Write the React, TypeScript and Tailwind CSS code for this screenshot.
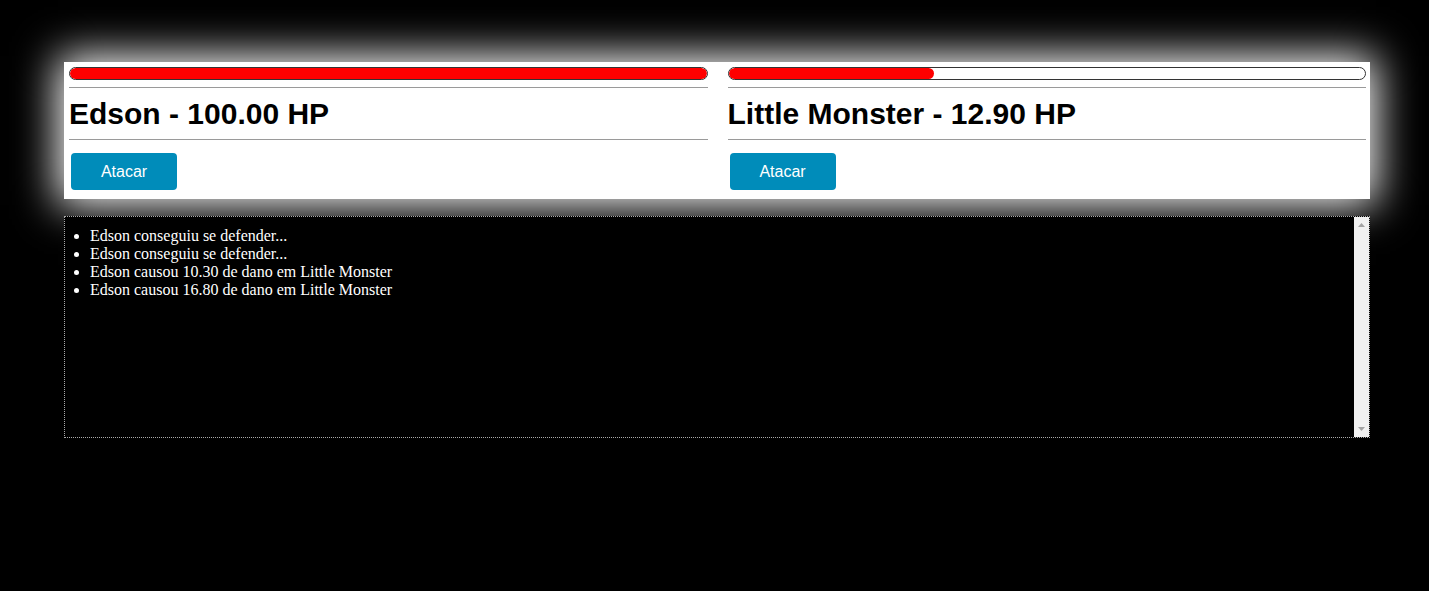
import React from "react";

type Fighter = { name: string; hp: string; pct: number };

const FIGHTERS: Fighter[] = [
  { name: "Edson", hp: "100.00", pct: 100 },
  { name: "Little Monster", hp: "12.90", pct: 32.3 },
];

const LOGS = [
  "Edson conseguiu se defender...",
  "Edson conseguiu se defender...",
  "Edson causou 10.30 de dano em Little Monster",
  "Edson causou 16.80 de dano em Little Monster",
];

function FighterCard({ fighter }: { fighter: Fighter }) {
  return (
    <div className="flex flex-col">
      <div className="h-[13px] rounded-full border border-[#333] bg-white overflow-hidden">
        <div
          className="h-full rounded-full bg-[#ff0000]"
          style={{ width: `${fighter.pct}%` }}
        />
      </div>
      <hr className="mt-[7px] border-t border-[#9a9a9a]" />
      <h2 className="h-[51px] flex items-center text-[30px] font-bold text-black leading-[34px]">
        {fighter.name} - {fighter.hp} HP
      </h2>
      <hr className="border-t border-[#9a9a9a]" />
      <div className="pt-[13px]">
        <button className="ml-[2px] h-[37px] w-[106px] rounded-[4px] bg-[#008cba] text-[16px] text-white">
          Atacar
        </button>
      </div>
    </div>
  );
}

// fake classic scrollbar, headless chrome hides the real one
function ScrollBar() {
  return (
    <div className="w-[15px] shrink-0 bg-[#f1f1f1] flex flex-col items-center justify-between py-[6px]">
      <svg width="7" height="4" viewBox="0 0 7 4">
        <path d="M3.5 0 L7 4 L0 4 Z" fill="#a3a3a3" />
      </svg>
      <svg width="7" height="4" viewBox="0 0 7 4">
        <path d="M0 0 L7 0 L3.5 4 Z" fill="#a3a3a3" />
      </svg>
    </div>
  );
}

export default function App() {
  return (
    <div
      className="min-h-[591px] bg-black pt-[62px] pl-[64px]"
      style={{ fontFamily: '"Liberation Sans", Arial, sans-serif' }}
    >
      <div className="w-[1306px] bg-white shadow-[0_0_40px_6px_#ffffff] grid grid-cols-2 gap-x-[20px] pl-[5px] pr-[4px] pt-[5px] pb-[9px]">
        {FIGHTERS.map((f) => (
          <FighterCard key={f.name} fighter={f} />
        ))}
      </div>

      <div className="mt-[17px] w-[1306px] h-[222px] border border-dotted border-[#aaa] bg-black flex">
        <ul
          className="flex-1 list-disc pl-[25px] pt-[10px] text-white text-[16px] leading-[18px]"
          style={{ fontFamily: '"Liberation Serif", "Times New Roman", serif' }}
        >
          {LOGS.map((l, i) => (
            <li key={i}>{l}</li>
          ))}
        </ul>
        <ScrollBar />
      </div>
    </div>
  );
}
